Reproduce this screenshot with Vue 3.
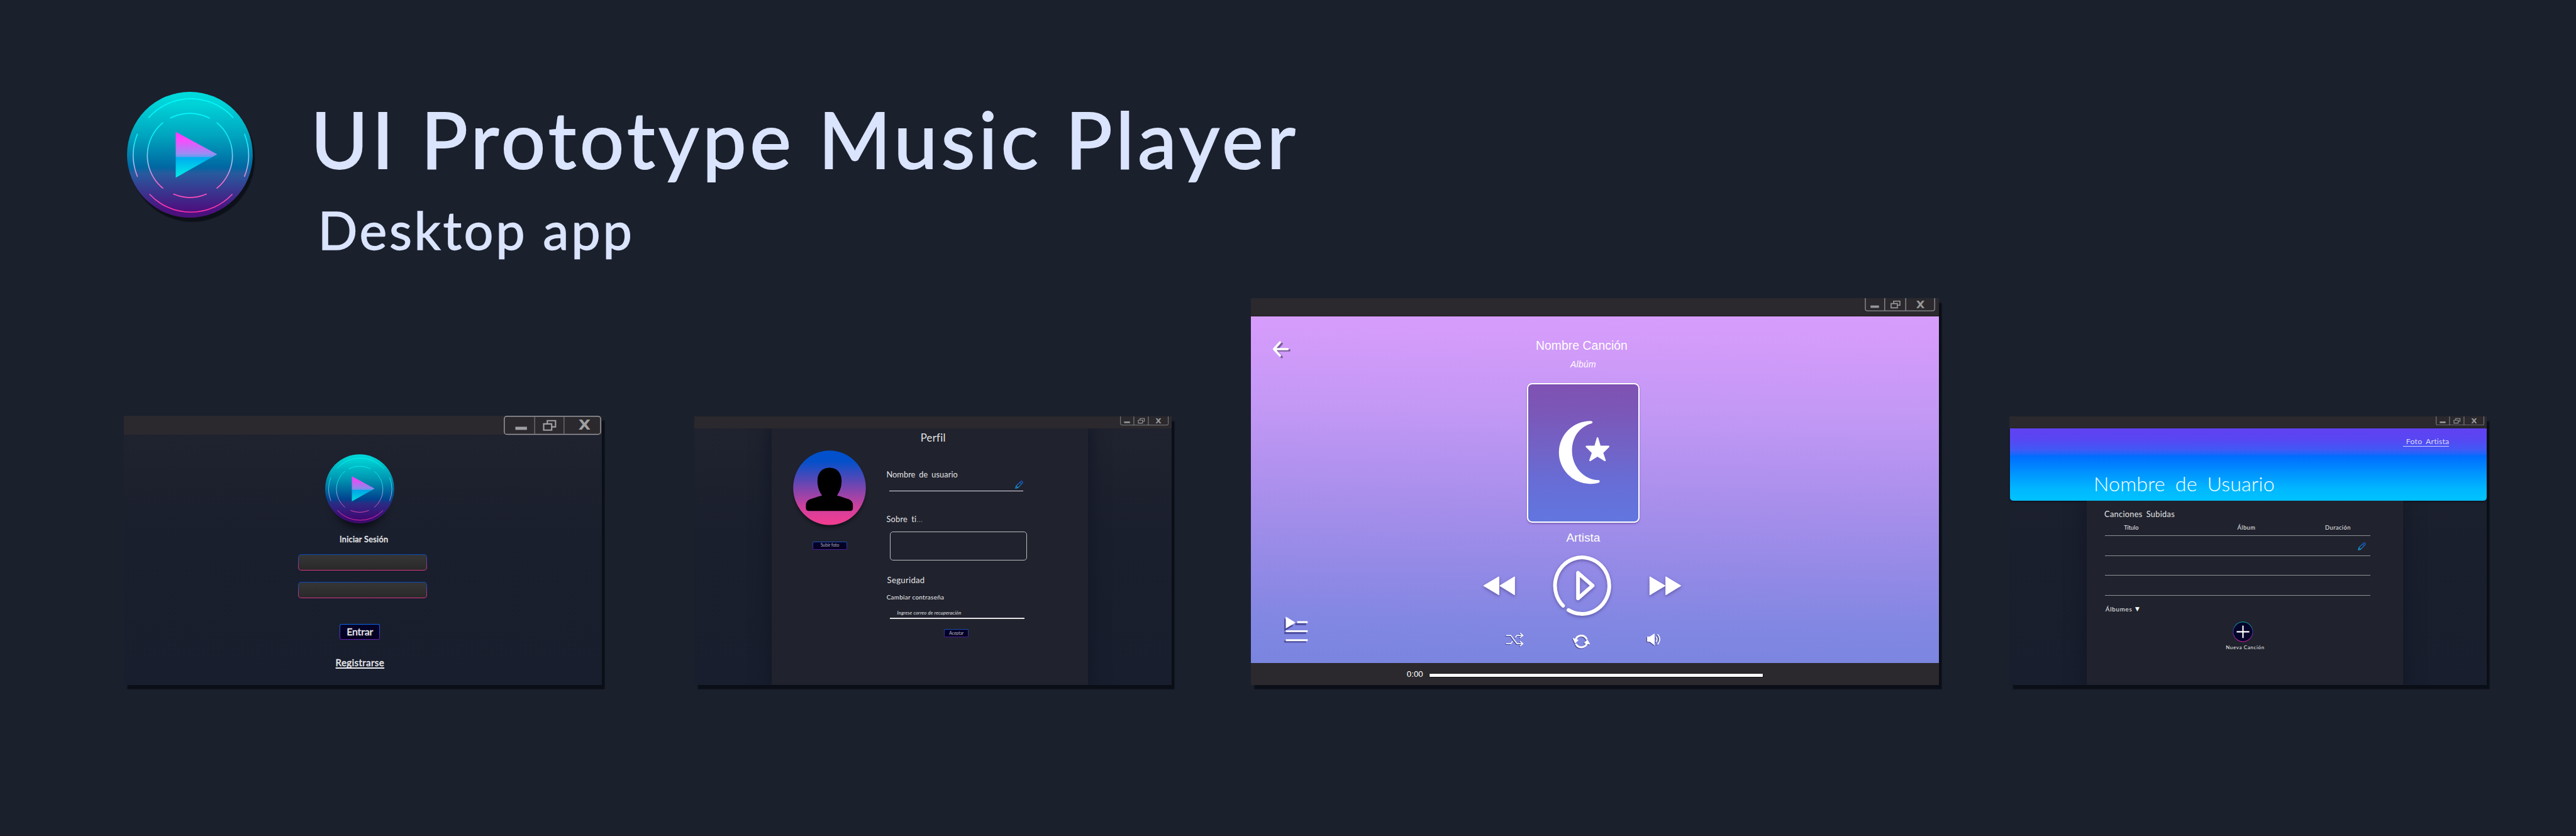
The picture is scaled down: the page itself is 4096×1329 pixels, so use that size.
<script setup>
const fields = ['user', 'password']
const columns = [
  { label: 'Título', cls: 'col-title' },
  { label: 'Álbum', cls: 'col-album' },
  { label: 'Duración', cls: 'col-length' },
]
const songs = [
  { id: 1, editable: true },
  { id: 2, editable: false },
  { id: 3, editable: false },
]
</script>

<template>
  <main class="board">
    <!-- shared shapes -->
    <svg class="defs" width="0" height="0" aria-hidden="true">
      <defs>
        <linearGradient id="discBright" x1="0" y1="0" x2="0" y2="1">
          <stop offset="0" stop-color="#00dcdc" />
          <stop offset=".1" stop-color="#00d2d8" />
          <stop offset=".35" stop-color="#00a4be" />
          <stop offset=".6" stop-color="#0067a2" />
          <stop offset=".65" stop-color="#285a9e" />
          <stop offset=".93" stop-color="#4a1380" />
          <stop offset="1" stop-color="#4b107c" />
        </linearGradient>
        <linearGradient id="discDeep" x1="0" y1="0" x2="0" y2="1">
          <stop offset="0" stop-color="#00d8da" />
          <stop offset=".1" stop-color="#00ccd0" />
          <stop offset=".35" stop-color="#0097b2" />
          <stop offset=".65" stop-color="#00448f" />
          <stop offset=".71" stop-color="#2a2c84" />
          <stop offset=".9" stop-color="#3d0d76" />
          <stop offset="1" stop-color="#3c0a6c" />
        </linearGradient>
        <linearGradient id="ringInk" gradientUnits="userSpaceOnUse" x1="0" y1="-110" x2="0" y2="110">
          <stop offset="0" stop-color="#00fafa" />
          <stop offset=".38" stop-color="#12ecfa" />
          <stop offset=".56" stop-color="#a8c4ec" />
          <stop offset=".75" stop-color="#f46cc8" />
          <stop offset="1" stop-color="#ff2ea8" />
        </linearGradient>
        <linearGradient id="arrowInk" x1="0" y1="0" x2="0" y2="1">
          <stop offset="0" stop-color="#ff38ff" />
          <stop offset=".18" stop-color="#f84cfc" />
          <stop offset=".48" stop-color="#9c8cf4" />
          <stop offset=".55" stop-color="#54a0f0" />
          <stop offset=".56" stop-color="#00acf0" />
          <stop offset="1" stop-color="#00f0e6" />
        </linearGradient>
        <linearGradient id="avatarInk" x1="0" y1="0" x2="0" y2="1">
          <stop offset="0" stop-color="#0050cc" />
          <stop offset=".15" stop-color="#0450ca" />
          <stop offset=".45" stop-color="#6a46b2" />
          <stop offset=".75" stop-color="#cc409e" />
          <stop offset="1" stop-color="#f43c90" />
        </linearGradient>
        <linearGradient id="pencilInk" x1="0" y1="0" x2="0" y2="1">
          <stop offset="0" stop-color="#1560e8" />
          <stop offset="1" stop-color="#18a8e8" />
        </linearGradient>
        <linearGradient id="plusInk" x1="0" y1="0" x2="0" y2="1">
          <stop offset="0" stop-color="#00a8a8" />
          <stop offset=".5" stop-color="#3c3494" />
          <stop offset="1" stop-color="#c81ca0" />
        </linearGradient>
      </defs>

      <symbol id="discMarks" viewBox="-122 -122 244 244">
        <g fill="none" stroke="url(#ringInk)" stroke-width="2" stroke-linecap="round">
          <path d="M-80 -72A110 110 0 0 1 84 -72" />
          <path d="M-78 77A110 110 0 0 0 82 77" />
          <path d="M-102 -40A111 111 0 0 0 -102 42" />
          <path d="M106 -40A111 111 0 0 1 106 42" />
          <path d="M-38 -71A81.5 81.5 0 0 1 38 -71" />
          <path d="M-31.5 76.5A81.5 81.5 0 0 0 32 76.5" />
          <path d="M-52.5 -62A82 82 0 0 0 -52.5 65" />
          <path d="M52.5 -62A82 82 0 0 1 52.5 65" />
        </g>
        <path d="M-27.5 -44.5L53 -.8L-27.5 44.5Z" fill="url(#arrowInk)" />
      </symbol>

      <symbol id="winButtons" viewBox="0 0 137 26">
        <path d="M1.2 -1V20.5Q1.2 24.6 5.5 24.6H131.5Q135.8 24.6 135.8 20.5V-1M38.8 0V24.6M79.6 0V24.6" fill="none" stroke="#8d8d91" stroke-width="1.7" />
        <rect x="11.3" y="14.2" width="16.4" height="4.6" fill="#98989a" />
        <path d="M56.2 10V5.8H68.3V13.8H64.5M51.2 10.6H63.4V18.8H51.2Z" fill="none" stroke="#98989a" stroke-width="2" />
        <text transform="translate(108 19.2) scale(1.12 1)" text-anchor="middle" class="close-x">X</text>
      </symbol>

      <symbol id="pencil" viewBox="0 0 16 16">
        <g fill="none" stroke="url(#pencilInk)" stroke-width="1.25" stroke-linejoin="round">
          <path d="M1 15L2 10.5L10.8 1.9Q12.5 .3 14.2 1.9Q15.7 3.5 14.1 5.2L5.4 14Z" />
          <path d="M9.3 3.4L12.7 6.6M2 10.5L5.4 14" />
        </g>
      </symbol>
    </svg>

    <header class="masthead">
      <svg class="brand" viewBox="-122 -122 244 244">
        <circle r="122" fill="url(#discBright)" />
        <use href="#discMarks" x="-122" y="-122" width="244" height="244" />
      </svg>
      <div class="titles">
        <h1>UI Prototype Music Player</h1>
        <h2>Desktop app</h2>
      </div>
    </header>

    <section class="screens">
      <!-- sign in -->
      <article class="win login">
        <div class="bar">
          <svg class="big-buttons" viewBox="0 0 189 37">
            <rect x="1" y="1" width="187" height="35" rx="5" fill="none" stroke="#9a9a9e" stroke-width="1.8" />
            <path d="M60 1V36M117 1V36" stroke="#77777b" stroke-width="1.5" />
            <rect x="22.5" y="21.3" width="22.5" height="6" fill="#a0a0a2" />
            <path d="M84.500 14.500V9.500H100.500V21.500H94M77.500 15.800H93V27.800H77.500Z" fill="none" stroke="#a0a0a2" stroke-width="2.6" />
            <text transform="translate(156.8 27.2) scale(1.15 1)" text-anchor="middle" class="close-x large">X</text>
          </svg>
        </div>
        <div class="login-body">
          <svg class="brand-small" viewBox="-122 -122 244 244">
            <circle r="122" fill="url(#discDeep)" />
            <use href="#discMarks" x="-122" y="-122" width="244" height="244" opacity=".9" />
          </svg>
          <p class="login-title">Iniciar Sesión</p>
          <div v-for="f in fields" :key="f" class="field"></div>
          <div class="chip enter">Entrar</div>
          <p class="register">Registrarse</p>
        </div>
      </article>

      <!-- profile -->
      <article class="win profile">
        <div class="bar">
          <svg class="buttons"><use href="#winButtons" width="94.4" height="17.9" /></svg>
        </div>
        <div class="panel">
          <p class="profile-title">Perfil</p>
          <div class="profile-row">
            <div class="photo-col">
              <svg class="avatar" viewBox="0 0 142 145">
                <ellipse cx="71" cy="72.5" rx="70.7" ry="72.5" fill="url(#avatarInk)" />
                <path d="M71 33.5C86 33.5 94.5 44 94.5 59C94.5 71 91 80 85.5 87.5Q100 91.5 109 95Q116.5 98.5 116.5 106V112Q116.5 117.5 111 117.5H31Q25 117.5 25 112V106Q25 98.5 32.5 95Q42 91.5 56.5 87.5C51 80 47.5 71 47.5 59C47.5 44 56 33.5 71 33.5Z" fill="#000" />
              </svg>
              <div class="chip upload">Subir foto</div>
            </div>
            <div class="form-col">
              <p class="lead name-label">Nombre de usuario</p>
              <div class="name-line"><svg class="pencil"><use href="#pencil" width="16" height="16" /></svg></div>
              <p class="lead about-label">Sobre ti<span class="dots">...</span></p>
              <div class="about-box"></div>
              <p class="security">Seguridad</p>
              <p class="change">Cambiar contraseña</p>
              <p class="hint">Ingrese correo de recuperación</p>
              <div class="hint-line"></div>
              <div class="chip accept">Aceptar</div>
            </div>
          </div>
        </div>
      </article>

      <!-- player -->
      <article class="win player">
        <div class="bar">
          <svg class="buttons"><use href="#winButtons" width="137" height="26" /></svg>
        </div>
        <div class="stage">
          <div class="side">
            <svg class="back" viewBox="0 0 40 40">
              <g fill="none" stroke-width="4.4" stroke-linecap="round" stroke-linejoin="round">
                <path d="M22 9L10.5 22L22 35M10.5 22H37" stroke="#7c5c9c" />
                <path d="M18.5 6.5L7 19.6L18.5 32M7 19.6H33.5" stroke="#fff" />
              </g>
            </svg>
            <svg class="queue" viewBox="0 0 50 54">
              <path d="M2.5 5L20 19.5L2.5 30ZM24 14H45V18H24ZM2.5 31H45V35H2.5ZM2.5 48H45V52H2.5Z" fill="#4a4a9c" />
              <path d="M5.5 1.5L24.5 13L5.5 24.5ZM27.5 10.5H48V14H27.5ZM5.5 28H48V31.5H5.5ZM5.5 45.5H48V49H5.5Z" fill="#fff" />
            </svg>
          </div>
          <div class="now">
            <p class="song">Nombre Canción</p>
            <p class="album">Albúm</p>
            <div class="cover">
              <svg viewBox="0 0 110 130">
                <path d="M69 4A61 61 0 0 0 67 126Q76 126.5 84 124Q88 121.5 85 118.7C55 119 32.5 92 32.5 62C32.5 38 44 16 71 8.5Q74.5 5 69 4Z" fill="#fff" />
                <path d="M82 37L86.8 53.5H103.5L91.5 65.5L96.5 80.5L82 71.5L67.5 80.5L72.5 65.5L60.5 53.5H77.2Z" fill="#fff" stroke="#fff" stroke-width="3" stroke-linejoin="round" />
              </svg>
            </div>
            <p class="artist">Artista</p>
            <div class="transport">
              <svg class="skip" viewBox="0 0 66 44">
                <path d="M3 22.2L32 5V39.5ZM34.5 22.2L62.5 5V39.5Z" fill="#fff" stroke="#fff" stroke-width="1.6" stroke-linejoin="round" />
              </svg>
              <svg class="play" viewBox="0 0 122 126">
                <g fill="none" stroke="#fff" stroke-width="7.3" stroke-linecap="round" stroke-linejoin="round">
                  <path d="M23.7 101.3A52.7 54.8 0 1 1 34.3 109.7" />
                  <path d="M52.7 37.5V87L81 62.2Z" />
                </g>
              </svg>
              <svg class="skip" viewBox="0 0 66 44">
                <path d="M3 5L32 22.2L3 39.5ZM34 5L62.5 22.2L34 39.5Z" fill="#fff" stroke="#fff" stroke-width="1.6" stroke-linejoin="round" />
              </svg>
            </div>
            <div class="extras">
              <svg class="shuffle" viewBox="0 0 36 30">
                <path d="M1 6.3H10L22 22.3H33M1 22.3H10L13.5 17.8M18.5 10.5L22 6.3H33M28 1.5L33.5 6.3L28 11M28 17.5L33.5 22.3L28 27" fill="none" stroke="#fff" stroke-width="1.9" />
              </svg>
              <svg class="repeat" viewBox="0 0 38 34">
                <path d="M7.5 12A11.8 11.8 0 0 1 29 10.5M9 21.5A11.8 11.8 0 0 0 30 19" fill="none" stroke="#fff" stroke-width="3.6" stroke-linecap="round" />
                <path d="M3 10L12.5 13L7 18.5ZM25 18.5L30.5 13L34.8 20.5Z" fill="#fff" stroke="#fff" stroke-width="1.5" stroke-linejoin="round" />
              </svg>
              <svg class="volume" viewBox="0 0 32 28">
                <path d="M2.5 8.5H7.5L17 2.500V25.500L7.500 18.500H2.500Z" fill="#fff" />
                <path d="M19.5 8.5Q23.5 13.5 19.5 19M22.5 4Q31.5 13.5 22.5 24" fill="none" stroke="#fff" stroke-width="1.9" />
              </svg>
            </div>
          </div>
        </div>
        <footer class="progress">
          <span class="time">0:00</span>
          <div class="track"></div>
        </footer>
      </article>

      <!-- artist page -->
      <article class="win artist-page">
        <div class="bar">
          <svg class="buttons"><use href="#winButtons" width="94.4" height="17.9" /></svg>
        </div>
        <div class="banner">
          <p class="photo-link">Foto Artista</p>
          <p class="user-name">Nombre de Usuario</p>
        </div>
        <div class="panel">
          <p class="uploads">Canciones Subidas</p>
          <div class="table">
            <div class="thead">
              <span v-for="c in columns" :key="c.label" :class="c.cls">{{ c.label }}</span>
            </div>
            <div v-for="s in songs" :key="s.id" class="trow">
              <svg v-if="s.editable" class="pencil"><use href="#pencil" width="16" height="16" /></svg>
            </div>
          </div>
          <p class="albums">Álbumes <span class="caret">▼</span></p>
          <svg class="add" viewBox="0 0 40 40">
            <circle cx="20" cy="20" r="19" fill="#05042a" stroke="url(#plusInk)" stroke-width="1.3" />
            <path d="M7.8 20H32.4M20.1 8V32" stroke="#fff" stroke-width="2.6" />
          </svg>
          <p class="new-song">Nueva Canción</p>
        </div>
      </article>
    </section>
  </main>
</template>

<style>
html,
body {
  margin: 0;
  background: #1b202d;
  overflow: hidden;
}
</style>

<style scoped>
.board {
  zoom: 0.8192;
  box-sizing: border-box;
  width: 5000px;
  height: 1622px;
  overflow: hidden;
  background: #1b202d;
  border-bottom: 1.4px solid #20182a;
  font-family: Lato, sans-serif;
  color: #e2e2e6;
}
.defs {
  position: absolute;
}
svg {
  display: block;
  flex: none;
  overflow: visible;
}
p,
h1,
h2 {
  margin: 0;
  line-height: 1;
  font-weight: 400;
  white-space: nowrap;
}
.close-x {
  font: bold 19.2px 'DejaVu Sans', sans-serif;
  fill: #98989a;
}
.close-x.large {
  font-size: 26.5px;
  fill: #a0a0a2;
}

/* heading */
.masthead {
  box-sizing: border-box;
  height: 579px;
  padding: 178px 0 0 246px;
  display: flex;
  align-items: flex-start;
}
.brand {
  width: 244px;
  height: 244px;
  border-radius: 50%;
  box-shadow: 5px 8px 2px #0c1018;
}
.titles {
  margin-left: 113px;
  color: #dae4fc;
}
h1 {
  margin-top: 15.2px;
  font-size: 152px;
  letter-spacing: 0.0452em;
  -webkit-text-stroke: 2.4px #dae4fc;
}
h2 {
  margin: 50.5px 0 0 14px;
  font-size: 101.2px;
  letter-spacing: 0.0445em;
  -webkit-text-stroke: 1.6px #dae4fc;
}

/* windows */
.screens {
  display: flex;
  align-items: flex-end;
  height: 750px;
  padding-left: 240px;
}
.win {
  flex: none;
  display: flex;
  flex-direction: column;
  background: linear-gradient(#20232f, #1a1f2d 45%, #181e2d);
  box-shadow: 6px 8px 2px #0a0e16;
}
.bar {
  flex: none;
  display: flex;
  justify-content: flex-end;
  background: #2b292d;
}
.chip {
  box-sizing: border-box;
  display: flex;
  justify-content: center;
  align-items: center;
  line-height: 1;
  border: 1.5px solid transparent;
  border-radius: 3px;
  background:
    linear-gradient(#04022a, #06001e) padding-box,
    linear-gradient(#1c50b0, #4a1c94) border-box;
}
.panel {
  flex: 1;
  width: 614px;
  margin-left: 149.5px;
  background: #20222d;
  box-shadow: 0 0 28px 6px #131827;
  clip-path: inset(0 -60px 0 -60px);
}
.pencil {
  width: 16px;
  height: 16px;
}

/* sign in */
.login {
  width: 928px;
  height: 521.6px;
}
.login .bar {
  height: 36.6px;
}
.big-buttons {
  width: 189px;
  height: 37px;
  margin-right: 1px;
}
.login-body {
  display: flex;
  flex-direction: column;
  align-items: flex-start;
}
.brand-small {
  width: 134px;
  height: 134.5px;
  margin: 37.4px 0 0 391.6px;
  border-radius: 50%;
  box-shadow: 0 26px 16px -18px #090c14;
}
.login-title {
  margin: 23.4px 0 0 419.2px;
  font-size: 15.5px;
  letter-spacing: 0.0244em;
  color: #ececee;
  -webkit-text-stroke: 0.5px #ececee;
}
.field {
  box-sizing: border-box;
  width: 251px;
  height: 31.8px;
  margin: 20.2px 0 0 338.3px;
  border: 1.8px solid transparent;
  border-radius: 6px;
  background:
    linear-gradient(#363636, #292929) padding-box,
    linear-gradient(#0a48b4 8%, #d83484 92%) border-box;
}
.field + .field {
  margin-top: 22.5px;
}
.enter {
  width: 77.2px;
  height: 30.8px;
  margin: 49.7px 0 0 419.8px;
  padding-bottom: 2px;
  border-width: 1.8px;
  background:
    linear-gradient(#04022a, #06001e) padding-box,
    linear-gradient(#0868e8, #6420b4) border-box;
  font-size: 19.5px;
  letter-spacing: -0.011em;
  color: #ececf0;
  -webkit-text-stroke: 0.5px #ececf0;
}
.register {
  margin: 34.9px 0 0 411.4px;
  font-size: 18.5px;
  letter-spacing: 0.0247em;
  color: #ececf0;
  -webkit-text-stroke: 0.5px #ececf0;
  text-decoration: underline 2px;
  text-underline-offset: 2.6px;
  text-decoration-skip-ink: none;
}

/* profile */
.profile {
  width: 926.2px;
  height: 520.6px;
  margin-left: 179.8px;
}
.profile .bar {
  height: 23px;
}
.profile .buttons,
.artist-page .buttons {
  width: 94.4px;
  height: 17.9px;
  margin-right: 5px;
  overflow: hidden;
}
.profile-title {
  margin: 8px 0 -1.5px 289.5px;
  font-size: 20.5px;
  letter-spacing: 0.015em;
}
.profile-row {
  display: flex;
}
.photo-col {
  width: 223.2px;
}
.avatar {
  width: 141.6px;
  height: 145px;
  margin: 15.6px 0 0 42.3px;
  border-radius: 50%;
  box-shadow: 0 6px 7px -2px #11131c;
}
.upload {
  width: 67.3px;
  height: 15.7px;
  margin: 31.7px 0 0 79.7px;
  font-size: 9px;
  letter-spacing: -0.03em;
  color: #a8a8b8;
}
.lead {
  font-size: 15.6px;
  letter-spacing: 0.006em;
  word-spacing: 0.2em;
}
.name-label {
  margin-top: 54.6px;
}
.name-line {
  box-sizing: border-box;
  display: flex;
  justify-content: flex-end;
  width: 260.5px;
  height: 24.6px;
  margin-left: 5.3px;
  padding-top: 3.8px;
  border-bottom: 2.2px solid #e6dff0;
}
.about-label {
  margin-top: 46.6px;
  letter-spacing: 0.021em;
}
.dots {
  color: #6c6e78;
}
.about-box {
  box-sizing: border-box;
  width: 266.3px;
  height: 55.4px;
  margin: 16.4px 0 0 6.5px;
  border: 1.5px solid #bcbcc0;
  border-radius: 6px;
}
.security {
  margin: 31.5px 0 0 1.5px;
  font-size: 16px;
  letter-spacing: 0.023em;
}
.change {
  margin: 19.1px 0 0 0.3px;
  font-size: 12px;
  letter-spacing: 0.0345em;
  color: #f0f0f2;
}
.hint {
  margin: 19.2px 0 0 21px;
  font-size: 9.3px;
  font-style: italic;
  letter-spacing: 0.025em;
}
.hint-line {
  width: 261.3px;
  height: 2.4px;
  margin: 4.6px 0 0 6.5px;
  background: #e2e2e4;
}
.accept {
  width: 47.2px;
  height: 15.7px;
  margin: 19.1px 0 0 112.4px;
  font-size: 8.5px;
  letter-spacing: -0.02em;
  color: #b4b4c0;
}

/* player */
.player {
  width: 1335px;
  height: 750px;
  margin-left: 154px;
  color: #fff;
}
.player .bar {
  height: 34.7px;
  box-sizing: border-box;
  border-bottom: 1px solid #1c1a20;
}
.player .buttons {
  width: 137px;
  height: 26px;
  margin-right: 6.5px;
  overflow: hidden;
}
.stage {
  flex: none;
  height: 673px;
  display: flex;
  background: linear-gradient(180.8deg, #d89dfc 0%, #d39bfa 8%, #c398f5 28%, #aa8fec 52%, #8f89e5 76%, #8187e2 88%, #7a85df 100%);
}
.side {
  width: 444.1px;
  display: flex;
  flex-direction: column;
  justify-content: space-between;
}
.back {
  width: 40px;
  height: 40px;
  margin: 44px 0 0 38.4px;
}
.queue {
  width: 50px;
  height: 54px;
  margin: 0 0 38.2px 62.6px;
}
.now {
  width: 402px;
  display: flex;
  flex-direction: column;
  align-items: center;
  font-family: 'Liberation Sans', sans-serif;
}
.song {
  margin-top: 45px;
  padding-right: 6px;
  font-size: 23.6px;
  letter-spacing: 0.003em;
}
.album {
  margin-top: 16.6px;
  font-size: 17px;
  font-style: italic;
  letter-spacing: 0.02em;
}
.cover {
  box-sizing: border-box;
  width: 219.3px;
  height: 271.3px;
  margin-top: 27.1px;
  display: flex;
  padding: 68px 0 0 53px;
  border: 3.6px solid #fff;
  border-radius: 10px;
  background: linear-gradient(#7f52b2, #7b57b8 20%, #7164c8 50%, #686cd4 68%, #6276e0);
  box-shadow: 0 2px 3px rgba(90, 60, 150, 0.5);
}
.cover svg {
  width: 110px;
  height: 130px;
  margin: -0.5px 0 0 -0.5px;
}
.artist {
  margin-top: 17px;
  font-size: 23.3px;
}
.transport {
  align-self: flex-start;
  display: flex;
  align-items: center;
  gap: 67px;
  height: 126px;
  margin: 19.4px 0 0 5px;
  filter: drop-shadow(0 3px 3px rgba(60, 50, 120, 0.55));
}
.skip {
  width: 66px;
  height: 44px;
}
.transport .skip {
  margin-bottom: 2px;
}
.play {
  width: 122px;
  height: 126px;
}
.extras {
  align-self: flex-start;
  display: flex;
  margin: 27px 0 0 50px;
  filter: drop-shadow(-1px 2px 0.5px rgba(50, 45, 110, 0.75));
}
.shuffle {
  width: 36px;
  height: 30px;
}
.repeat {
  width: 38px;
  height: 34px;
  margin: 2px 0 0 92px;
}
.volume {
  width: 32px;
  height: 28px;
  margin-left: 106px;
}
.progress {
  flex: 1;
  display: flex;
  align-items: flex-start;
  background: #2b292d;
}
.time {
  width: 44px;
  margin: 13.5px 0 0 302.5px;
  font: 16.3px / 1 'Liberation Sans', sans-serif;
}
.track {
  width: 647.6px;
  height: 6.6px;
  margin-top: 20.4px;
  border-radius: 1px;
  background: #fff;
  box-shadow: 0 0 0 1px #0a0a0c;
}

/* artist page */
.artist-page {
  width: 927.2px;
  height: 521.5px;
  margin-left: 137px;
}
.artist-page .bar {
  height: 24.4px;
}
.banner {
  position: relative;
  display: flex;
  flex-direction: column;
  align-items: flex-start;
  height: 140px;
  margin: 0 0.7px 0 1.9px;
  border-radius: 0 0 6px 6px;
  background: linear-gradient(#6042f2, #5a45f3 14%, #3f5af6 30%, #1a66fa 36%, #006cff 38%, #0094ff 62%, #00b8ff 84%, #00c0ff 96%);
  box-shadow: 0 2px 4px #10141e;
}
.photo-link {
  align-self: flex-end;
  box-sizing: border-box;
  height: 16.9px;
  margin: 17.8px 72.5px 0 0;
  padding-left: 6.5px;
  border-bottom: 1.5px solid #cfd2fb;
  font-size: 15px;
  letter-spacing: 0.018em;
  word-spacing: 0.22em;
  color: #dcdcfc;
}
.user-name {
  margin: 52.9px 0 0 162px;
  font-size: 39.4px;
  font-weight: 300;
  letter-spacing: 0.004em;
  word-spacing: 0.22em;
  color: #fff;
}
.artist-page .panel {
  margin-left: 150.2px;
  display: flex;
  flex-direction: column;
  align-items: flex-start;
}
.uploads {
  margin: 18.4px 0 0 34.5px;
  font-size: 15.6px;
  letter-spacing: 0.024em;
  word-spacing: 0.2em;
}
.table {
  width: 514.7px;
  margin: 12.1px 0 0 36px;
}
.thead {
  box-sizing: border-box;
  height: 22.5px;
  display: grid;
  grid-template-columns: 220.3px 170.3px 1fr;
  padding-left: 36.4px;
  border-bottom: 2px solid #8e8f95;
  font-size: 11.3px;
  line-height: 1;
  color: #ececee;
}
.col-album,
.col-length {
  letter-spacing: 0.05em;
}
.trow {
  box-sizing: border-box;
  height: 38.4px;
  display: flex;
  justify-content: flex-end;
  padding: 11.5px 9px 0 0;
  border-bottom: 2px solid #8e8f95;
}
.albums {
  display: flex;
  margin: 20.8px 0 0 36.6px;
  font-size: 12px;
  letter-spacing: 0.074em;
  color: #f2f2f4;
}
.caret {
  margin-left: 5.5px;
  font: 11px / 1 'DejaVu Sans', sans-serif;
  letter-spacing: 0;
  color: #fff;
}
.add {
  width: 40px;
  height: 40px;
  margin: 17.8px 0 0 283.6px;
}
.new-song {
  margin: 6.2px 0 0 270.2px;
  font-size: 9.7px;
  letter-spacing: 0.085em;
  color: #f0f0f2;
}
</style>
